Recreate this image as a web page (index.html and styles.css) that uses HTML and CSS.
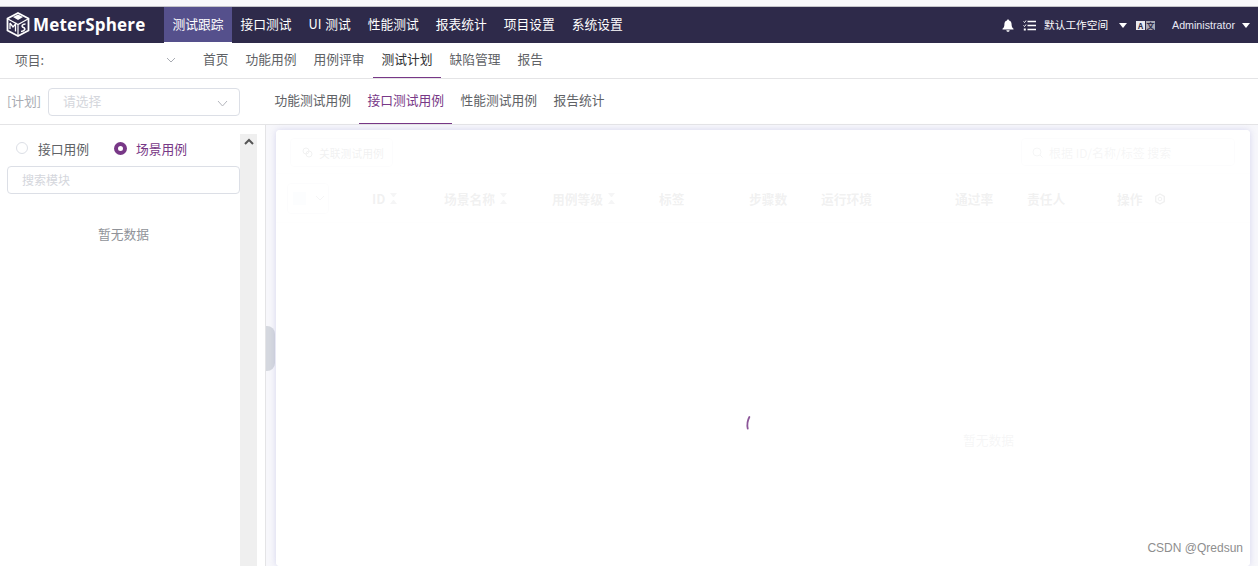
FILE: index.html
```html
<!DOCTYPE html>
<html lang="zh-CN">
<head>
<meta charset="utf-8">
<title>MeterSphere</title>
<link rel="stylesheet" href="styles.css">
</head>
<body>
<div class="strip"></div>
<header class="topbar">
    <div class="logo">
        <svg width="24" height="25" viewBox="0 0 24 25">
            <path d="M12 1 L22.5 6.5 V18.5 L12 24 L1.5 18.5 V6.5 Z" fill="none" stroke="#fff" stroke-width="1.8"/>
            <path d="M2 7 L12 12.5 L22 7 M12 12.5 V23.5" fill="none" stroke="#fff" stroke-width="1.2"/>
            <path d="M4 11 L4 17 M4 11 L7 15 L9.5 12 L9.5 19.5" fill="none" stroke="#fff" stroke-width="1.3"/>
            <path d="M19.5 12 C16 12 15 14.5 17.5 15.5 C20 16.5 19 19 15 19.5" fill="none" stroke="#fff" stroke-width="1.5"/>
            <path d="M7 5 L12 2.5 L17 5 L12 8 Z" fill="#fff"/>
        </svg>
        <span class="logo-text">MeterSphere</span>
    </div>
    <nav class="mainnav">
        <a class="active">测试跟踪</a>
        <a>接口测试</a>
        <a>UI 测试</a>
        <a>性能测试</a>
        <a>报表统计</a>
        <a>项目设置</a>
        <a>系统设置</a>
    </nav>
    <div class="topright">
        <svg class="bell" width="12" height="13" viewBox="0 0 12 13"><path d="M6 0.5 C6.8 .5 7 1 7 1.5 C9 2 9.6 3.6 9.6 5.5 C9.6 7.8 10.4 8.8 11.5 9.8 V10.5 H.5 V9.8 C1.6 8.8 2.4 7.8 2.4 5.5 C2.4 3.6 3 2 5 1.5 C5 1 5.2 .5 6 .5 Z M4.4 11.2 H7.6 C7.6 12.2 6.8 12.8 6 12.8 C5.2 12.8 4.4 12.2 4.4 11.2 Z" fill="#fff"/></svg>
        <svg class="tasks" width="13" height="11" viewBox="0 0 13 11"><path d="M4.5 1.5 H13 M4.5 5.5 H13 M4.5 9.5 H13" stroke="#fff" stroke-width="1.3"/><path d="M.5 1.5 L1.5 2.5 L3 .5 M.5 5.5 L1.5 6.5 L3 4.5" stroke="#fff" fill="none"/><rect x=".8" y="8.5" width="2" height="2" fill="#fff"/></svg>
        <span class="workspace">默认工作空间</span>
        <i class="caret caret-ws"></i>
        <div class="lang"><b>A</b><b class="lang-dark">文</b></div>
        <span class="user">Administrator</span>
        <i class="caret"></i>
    </div>
</header>
<div class="subnav">
    <div class="project">
        <span>项目:</span>
        <svg width="10" height="6" viewBox="0 0 10 6"><path d="M1 1 L5 5 L9 1" fill="none" stroke="#a8abb2"/></svg>
    </div>
    <a>首页</a>
    <a>功能用例</a>
    <a>用例评审</a>
    <a class="active">测试计划</a>
    <a>缺陷管理</a>
    <a>报告</a>
</div>
<div class="planbar">
    <span class="plan-label">[计划]</span>
    <div class="plan-select">
        <span>请选择</span>
        <svg width="11" height="7" viewBox="0 0 11 7"><path d="M1 1 L5.5 6 L10 1" fill="none" stroke="#b4b6bd"/></svg>
    </div>
    <div class="plantabs">
        <a>功能测试用例</a>
        <a class="active">接口测试用例</a>
        <a>性能测试用例</a>
        <a>报告统计</a>
    </div>
</div>
<div class="content">
    <aside class="side">
        <div class="side-body">
            <div class="radios">
                <label class="radio"><i></i>接口用例</label>
                <label class="radio on"><i></i>场景用例</label>
            </div>
            <div class="side-search">搜索模块</div>
            <div class="side-empty">暂无数据</div>
        </div>
        <div class="scrollbar">
            <svg width="10" height="7" viewBox="0 0 10 7"><path d="M1 6 L5 2 L9 6" fill="none" stroke="#555" stroke-width="2"/></svg>
        </div>
    </aside>
    <div class="handle-col"><div class="handle"></div></div>
    <main class="card">
        <div class="card-top">
            <div class="btn">
                <svg width="11" height="11" viewBox="0 0 11 11"><circle cx="4" cy="4" r="3" fill="none" stroke="#606266"/><circle cx="7" cy="7" r="3" fill="none" stroke="#606266"/></svg>
                关联测试用例
            </div>
            <div class="search">
                <svg width="11" height="11" viewBox="0 0 11 11"><circle cx="5" cy="5" r="4" fill="none" stroke="#909399"/><path d="M8 8 L10.5 10.5" stroke="#909399"/></svg>
                根据 ID/名称/标签 搜索
            </div>
        </div>
        <div class="thead">
            <div class="check-cell"><i></i><svg width="10" height="6" viewBox="0 0 10 6"><path d="M1 1 L5 5 L9 1" fill="none" stroke="#909399"/></svg></div>
            <div class="th">ID <i class="sort"></i></div>
            <div class="th">场景名称 <i class="sort"></i></div>
            <div class="th">用例等级 <i class="sort"></i></div>
            <div class="th">标签</div>
            <div class="th">步骤数</div>
            <div class="th">运行环境</div>
            <div class="th">通过率</div>
            <div class="th">责任人</div>
            <div class="th th-op">操作 <svg width="12" height="12" viewBox="0 0 12 12"><path d="M6 1 L10.3 3.5 V8.5 L6 11 L1.7 8.5 V3.5 Z" fill="none" stroke="#606266" stroke-width="1.4"/><circle cx="6" cy="6" r="1.8" fill="none" stroke="#606266"/></svg></div>
        </div>
        <div class="empty">暂无数据</div>
        <div class="mask">
            <svg width="42" height="42" viewBox="0 0 42 42"><path d="M8 7 A 17 17 0 0 0 4 18" transform="rotate(-12 21 21)" fill="none" stroke="#783887" stroke-width="1.8" stroke-linecap="round" opacity=".85"/></svg>
        </div>
    </main>
</div>
<div class="watermark">CSDN @Qredsun</div>
</body>
</html>
```

FILE: styles.css
```css
*{ box-sizing: border-box; }
html,body{ margin: 0; padding: 0; height: 566px; overflow: hidden; }
body{ font-family: "Noto Sans CJK SC", "Liberation Sans", sans-serif; font-size: 12.75px; color: #606266; background: #fff; }
i,em{ font-style: normal; }

.strip{ height: 7px; background: #f8f8fa; border-bottom: 1px solid #c4c4c8; }

/* top bar */
.topbar{ display: flex; height: 36px; background: #2e2a4a; color: #fff; }
.logo{ display: flex; align-items: center; width: 164px; padding: 0 0 1px 6px; gap: 3px; }
.logo-text{ font-family: "Open Sans", sans-serif; font-weight: 700; font-size: 17px; letter-spacing: .2px; }
.mainnav{ display: flex; }
.mainnav a{ padding: 0 8.5px; line-height: 33px; word-spacing: 1px; color: #fff; }
.mainnav a.active{ background: #55508c; border-bottom: 1px solid #fff; }
.topright{ display: flex; align-items: center; margin-left: auto; padding-right: 8px; font-size: 10.7px; }
.bell{ margin-right: 9px; }
.tasks{ margin-right: 8px; }
.workspace{ width: 66px; padding-bottom: 2px; white-space: nowrap; }
.caret{ width: 0; height: 0; border: 4px solid transparent; border-top: 5px solid #fff; border-bottom: 0; }
.caret-ws{ margin-left: 9px; margin-right: 9px; }
.lang{ display: flex; gap: 1px; margin-right: 17px; }
.lang b{ width: 9px; height: 9px; background: #e8e8ee; color: #2e2a4a; font-size: 8px; line-height: 9px; text-align: center; }
.lang b.lang-dark{ background: #a9a9b4; }
.user{ font-family: "Liberation Sans", sans-serif; width: 70px; font-size: 10.7px; color: #e8e8f4; }

/* project nav */
.subnav{ display: flex; height: 36px; border-bottom: 1px solid #e4e4e6; }
.project{ display: flex; justify-content: space-between; align-items: center; width: 194.5px; padding: 0 19px 2px 15px; }
.subnav a{ padding: 0 8.5px; line-height: 32px; }
.subnav a.active{ color: #303133; border-bottom: 1px solid #783887; height: 35px; }

/* plan bar */
.planbar{ display: flex; align-items: center; height: 46px; border-bottom: 1px solid #e4e4e6; }
.plan-label{ width: 48px; padding-left: 7px; padding-bottom: 3px; color: #a8abb2; }
.plan-select{ display: flex; justify-content: space-between; align-items: center; width: 192px; height: 28px; padding: 0 11px 2px 14px; border: 1px solid #dcdfe6; border-radius: 4px; color: #d4d6dc; }
.plan-select svg{ margin-top: 5px; }
.plantabs{ display: flex; margin-left: 26.25px; height: 45px; }
.plantabs a{ padding: 0 8.25px; line-height: 41px; }
.plantabs a.active{ color: #783887; border-bottom: 1px solid #783887; height: 45px; }

/* content */
.content{ display: flex; height: 441px; background: #f7f7fb; }
.side{ display: flex; width: 266px; padding: 9px 8px 0 7px; background: #fff; border-right: 1px solid #e4e4e6; }
.side-body{ width: 233px; }
.radios{ display: flex; height: 32px; align-items: center; padding: 0 0 4px 9px; }
.radio{ display: flex; align-items: center; margin-right: 25px; }
.radio i{ width: 12px; height: 12px; margin-right: 10px; border: 1px solid #dcdfe6; border-radius: 50%; }
.radio.on{ color: #783887; }
.radio.on i{ width: 13px; height: 13px; margin-right: 9px; border: 4.5px solid #783887; background: #fff; }
.side-search{ height: 28px; padding-left: 14px; line-height: 25px; font-size: 12px; color: #d4d6dc; border: 1px solid #dcdfe6; border-radius: 4px; }
.side-empty{ margin-top: 28px; line-height: 24px; text-align: center; color: #909399; }
.scrollbar{ width: 17px; background: #efefef; text-align: center; }
.scrollbar svg{ display: block; margin: 4px auto 0; }
.handle-col{ display: flex; align-items: flex-start; width: 10px; }
.handle{ width: 9px; height: 45px; margin-top: 201px; background: #d5d8df; border-radius: 0 8px 8px 0; }

/* table card, dimmed by the mask */
.card{ position: relative; width: 974px; margin-top: 5px; background: #fff; border-radius: 4px; box-shadow: 0 0 6px rgba(120,120,200,.25); }
.card-top{ display: flex; justify-content: space-between; height: 44px; padding: 8px 15px 0 14px; border-bottom: 1px solid #ebeef5; }
.btn{ display: flex; align-items: center; gap: 6px; width: 103px; height: 29px; padding-left: 11px; font-size: 10.8px; border: 1px solid #dcdfe6; border-radius: 4px; }
.search{ display: flex; align-items: center; gap: 6px; width: 214px; height: 28px; padding-left: 10px; font-size: 12px; color: #909399; border: 1px solid #dcdfe6; border-radius: 4px; }
.thead{ display: grid; grid-template-columns: 96px 72px 108px 107px 90px 72px 134px 72px 90px 90px; align-items: center; height: 49px; border-bottom: 1px solid #ebeef5; }
.th{ display: flex; align-items: center; gap: 5px; font-weight: 700; }
.th-op{ gap: 11px; }
.th-op svg{ margin-top: 2px; }
.sort{ width: 7px; height: 11px; border-style: solid; border-color: #909399 transparent; border-width: 4px 3.5px; background: none; }
.check-cell{ display: flex; align-items: center; gap: 9px; width: 42px; height: 31px; margin-left: 11px; padding-left: 5px; border: 1px solid #dcdfe6; border-radius: 4px; }
.check-cell i{ width: 13px; height: 13px; background: #dfe6f5; }
.empty{ margin-top: 205px; padding-left: 687px; line-height: 24px; color: #909399; }
.mask{ position: absolute; left: 0; top: 0; right: 0; bottom: 0; display: flex; justify-content: center; padding: 277px 0 0 4px; background: rgba(255,255,255,.91); border-radius: 4px; }

.watermark{ position: absolute; right: 15px; top: 541px; font-family: "Liberation Sans", sans-serif; font-size: 12px; color: #8e8e8e; }
```
